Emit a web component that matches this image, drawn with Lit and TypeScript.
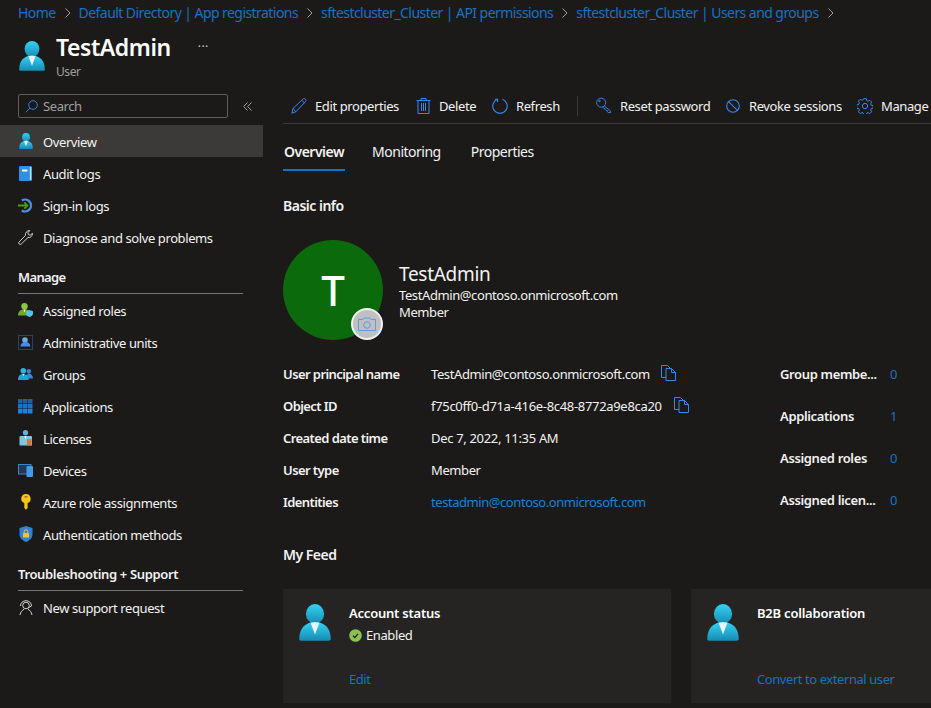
import { LitElement, html, css, svg } from "lit";
import { customElement } from "lit/decorators.js";

const defs = html`<svg width="0" height="0" style="position:absolute">
  <defs>
    <linearGradient id="usr" x1="0" y1="0" x2="0" y2="1">
      <stop offset="0" stop-color="#32d4f5" />
      <stop offset="1" stop-color="#198ab3" />
    </linearGradient>
  </defs>
</svg>`;

const blue = "#3a86f0";

// azure style person
const person = (w: number, h: number) => html`<svg width=${w} height=${h} viewBox="0 0 26 30">
  <ellipse cx="13" cy="8" rx="7.400" ry="8" fill="url(#usr)" />
  <path d="M0.200 28.400C0.200 20 5 14.600 13 14.600S25.800 20 25.800 28.400c0 .9-.6 1.400-1.400 1.400H1.600C.8 29.800.2 29.300.2 28.400Z" fill="url(#usr)" />
  <path d="M9.400 15.300 13 24.800l3.600-9.500c-2.300-.8-4.900-.8-7.200 0Z" fill="#e6f6fb" />
</svg>`;

const icons: Record<string, unknown> = {
  overview: person(14, 16),
  audit: html`<svg width="13" height="15" viewBox="0 0 13 15">
    <rect x="0" y="0" width="13" height="15" rx="1.200" fill="#2f8fe0" />
    <rect x="10.800" y="1" width="1.500" height="13" fill="#bcdcf7" />
    <rect x="3" y="3.500" width="5.500" height="2" fill="#fff" />
  </svg>`,
  signin: html`<svg width="15" height="15" viewBox="0 0 15 15">
    <path d="M3.800 2.600A5.900 5.900 0 1 1 3.800 12.400" fill="none" stroke="#4a90e2" stroke-width="2.400" />
    <path d="M0 7.500h9.500M6.300 4.300l3.200 3.200-3.200 3.200" fill="none" stroke="#4f9a12" stroke-width="1.800" />
  </svg>`,
  diagnose: html`<svg width="15" height="15" viewBox="0 0 15 15" fill="none" stroke="#d2d0ce" stroke-width="1">
    <path d="M.8 12.300 7.500 5.400C7 3 8.800.4 11.800.6L9.800 2.800 10.500 4.700 12.400 5.200 14.400 3.200C14.700 6.200 12.200 8 10 7.500L3 14.300C2 15.100 0 13.300.8 12.300Z" />
  </svg>`,
  roles: html`<svg width="15" height="14" viewBox="0 0 15 14">
    <circle cx="6.500" cy="3.200" r="3.200" fill="#8cc63f" />
    <path d="M0 12.500C0 8.500 2.500 6.300 6.500 6.300s6.500 2.200 6.500 6.200Z" fill="#6fa82d" />
    <path d="M5.500 6.500 6.500 9.500l1-3Z" fill="#fff" />
    <path d="M11.500 7l3.500 1.300v2.500c0 1.600-1.600 2.700-3.500 3.200-1.900-.5-3.500-1.600-3.500-3.200V8.300Z" fill="#50c4e8" />
  </svg>`,
  admin: html`<svg width="15" height="15" viewBox="0 0 15 15">
    <rect x="0.500" y="0.500" width="14" height="14" fill="none" stroke="#3d6fa8" stroke-dasharray="1 1" />
    <circle cx="7" cy="5" r="2.800" fill="#6aa9ee" />
    <path d="M2.500 11.500C2.500 8.500 4.500 7 7.500 7c3 0 4.800 1.500 4.800 4.500Z" fill="#4a8ee0" />
  </svg>`,
  groups: html`<svg width="15" height="12" viewBox="0 0 15 12">
    <circle cx="10.800" cy="3.200" r="2.300" fill="#3a83d6" />
    <path d="M8 10.500c0-3 1-5 3-5s4 2 4 5Z" fill="#3a83d6" />
    <circle cx="5.300" cy="2.800" r="2.800" fill="#2fb5dc" />
    <path d="M0 12c0-4 1.800-6 5.300-6s5.300 2 5.300 6Z" fill="#21a5cf" />
    <path d="M4.500 6 5.300 8.500 6.100 6Z" fill="#e6f6fb" />
  </svg>`,
  apps: html`<svg width="15" height="15" viewBox="0 0 15 15">
    ${[0, 5, 10].map((y) =>
      [0, 5, 10].map(
        (x) => svg`<rect x=${x} y=${y} width="4.500" height="4.500" fill=${y === 0 ? "#235d9c" : y === 5 ? "#1d72c8" : "#1f80e0"} />`
      )
    )}
  </svg>`,
  licenses: html`<svg width="13" height="16" viewBox="0 0 13 16">
    <circle cx="6.500" cy="2.700" r="2.600" fill="#5db4e0" />
    <path d="M.5 15.500V7a1 1 0 0 1 1-1H12a1 1 0 0 1 1 1v8.500Z" fill="#7cc4e8" />
    <path d="M5.500 6 6.500 9.500 7.500 6Z" fill="#fff" />
    <rect x="8" y="9" width="4.500" height="6.500" fill="#d9782a" />
  </svg>`,
  devices: html`<svg width="15" height="13" viewBox="0 0 15 13">
    <rect x="0.500" y="0.500" width="12.500" height="9.500" fill="#1d3a57" stroke="#3f82c8" />
    <rect x="8.500" y="2" width="6.500" height="11" rx="1" fill="#3f9bef" />
  </svg>`,
  key: html`<svg width="10" height="16" viewBox="0 0 10 16">
    <path d="M5 0a4.700 4.700 0 0 1 1.600 9.100V14L5 15.800 3.300 14V9.100A4.700 4.700 0 0 1 5 0Z" fill="#f5c518" />
    <rect x="3.500" y="2" width="3" height="1.500" fill="#a77d07" />
  </svg>`,
  auth: html`<svg width="14" height="16" viewBox="0 0 14 16">
    <path d="M7 0 13.500 2v6c0 4-3 6.500-6.500 8C3.500 14.500.5 12 .5 8V2Z" fill="#2f81dc" />
    <rect x="4" y="7" width="6" height="4.500" rx=".6" fill="#f5c518" />
    <path d="M5.200 7V5.500a1.800 1.800 0 0 1 3.600 0V7" fill="none" stroke="#f5c518" />
  </svg>`,
  support: html`<svg width="14" height="15" viewBox="0 0 14 15" fill="none" stroke="#d2d0ce" stroke-width="1">
    <circle cx="7" cy="5.500" r="3.300" />
    <path d="M1.500 6C1.500 2.800 4 .7 7 .7s5.500 2.100 5.500 5.300" />
    <path d="M1 15c.4-2.800 2.300-5 4-5.700M13 15c-.4-2.800-2.300-5-4-5.700" />
    <path d="M12.500 6 9 8" />
  </svg>`,
  edit: html`<svg width="16" height="16" viewBox="0 0 16 16" fill="none" stroke=${blue} stroke-width="1">
    <path d="M.8 15.200 2 10.500 11.900 1.100c.8-.7 1.900-.7 2.600.1.700.7.700 1.700 0 2.400L4.800 13.800Z" />
    <path d="M2 10.500 4.800 13.800M10.800 2.300l3 3" />
  </svg>`,
  trash: html`<svg width="15" height="16" viewBox="0 0 15 16" fill="none" stroke=${blue} stroke-width="1">
    <path d="M.5 2.500h14M2 2.500V15.500h11V2.500M5 2.500V.5h5v2M5.500 5v8M7.500 5v8M9.500 5v8" />
  </svg>`,
  refresh: html`<svg width="16" height="16" viewBox="0 0 16 16" fill="none" stroke=${blue} stroke-width="1.100">
    <path d="M5.500 1.300A7.200 7.200 0 1 0 10.500 1.300" />
    <path d="M2.900 1.200 5.700 1.300 5.600 4" />
  </svg>`,
  reset: html`<svg width="17" height="17" viewBox="0 0 17 17" fill="none" stroke=${blue} stroke-width="1">
    <circle cx="5.500" cy="5.500" r="4.800" />
    <circle cx="3.700" cy="3.700" r=".8" />
    <path d="M9 9 15.500 14.500V16H13L12 15V13.800H10.800L9.500 12.500V11.500H8.500L7 10.100" />
  </svg>`,
  revoke: html`<svg width="14" height="14" viewBox="0 0 14 14" fill="none" stroke=${blue} stroke-width="1.100">
    <circle cx="7" cy="7" r="6.300" />
    <path d="M2.600 2.600 11.400 11.400" />
  </svg>`,
  gear: html`<svg width="16" height="16" viewBox="0 0 16 16" fill="none" stroke=${blue} stroke-width="1">
    <circle cx="8" cy="8" r="2.700" />
    <path d="M6.700.7h2.600l.4 2 1.300.6 1.800-1 1.800 1.900-1 1.700.6 1.400 2 .4v2.600l-2 .4-.6 1.300 1 1.800-1.800 1.800-1.800-1-1.300.6-.4 2H6.700l-.4-2-1.300-.6-1.800 1-1.800-1.800 1-1.800-.6-1.300-2-.4V6.700l2-.4.6-1.400-1-1.700 1.800-1.900 1.800 1 1.300-.6Z" />
  </svg>`,
};

const copyIcon = html`<svg class="copy" width="15" height="16" viewBox="0 0 15 16" fill="none" stroke=${blue} stroke-width="1">
  <path d="M5 12.500H.5V.5H6.500L9 3" />
  <path d="M5 3.500h5.500l4 4v8H5ZM10.500 3.500v4h4" />
</svg>`;

const camera = html`<svg width="18" height="14" viewBox="0 0 18 14" fill="none" stroke="#5a9bec" stroke-width="1">
  <path d="M.5 2.500h4.500l1-1.500h6l1 1.500h4.500v11H.5Z" />
  <circle cx="9" cy="8" r="3.300" />
</svg>`;

const nav = (icon: string, label: string, selected = false) =>
  html`<div class="nav ${selected ? "selected" : ""}">
    <span class="nav-icon">${icons[icon]}</span><span class="nav-label">${label}</span>
  </div>`;

const tool = (icon: string, label: string, width: number) =>
  html`<div class="tool" style="width:${width}px">
    <span class="tool-icon">${icons[icon]}</span><span>${label}</span>
  </div>`;

@customElement("app-root")
export class AppRoot extends LitElement {
  static styles = css`
    :host {
      display: block;
      width: 931px;
      height: 708px;
      overflow: hidden;
      background: #1b1a19;
      color: #f3f2f1;
      font: 13px/18px "Noto Sans", sans-serif;
      letter-spacing: -0.4px;
    }
    a { color: #1673c4; text-decoration: none; }
    .crumbs {
      display: flex;
      align-items: center;
      height: 26px;
      padding-left: 18px;
      white-space: nowrap;
      font-size: 14px;
      letter-spacing: -0.56px;
      color: #1673c4;
    }
    .crumbs svg { margin: 0 8px 0 9px; }
    .head { display: flex; height: 68px; padding-left: 19px; }
    .head-icon { margin: 15px 11px 0 0; }
    .head-title { padding-top: 7px; }
    .head-title h1 {
      margin: 0;
      font-size: 23px;
      line-height: 28px;
      font-weight: 600;
      color: #fff;
      letter-spacing: -0.45px;
    }
    .head-title div { margin-top: 3px; font-size: 12px; line-height: 16px; color: #a19f9d; }
    .more { margin: 12px 0 0 27px; color: #c8c6c4; font-size: 12px; letter-spacing: 0.5px; }
    .body { display: flex; }
    .side { width: 263px; flex: none; }
    .search-row { display: flex; align-items: center; padding-left: 18px; height: 24px; margin-bottom: 7px; }
    .search {
      display: flex;
      align-items: center;
      gap: 5px;
      box-sizing: border-box;
      width: 210px;
      height: 24px;
      padding-left: 6px;
      border: 1px solid #605e5c;
      border-radius: 2px;
      color: #a19f9d;
    }
    .collapse { display: flex; margin-left: 15px; }
    .nav { display: flex; align-items: center; height: 32px; padding-left: 18px; }
    .nav.selected { background: #3b3a39; }
    .nav-icon { display: flex; justify-content: center; width: 15px; margin-right: 10px; }
    .nav-label { padding-top: 2px; }
    .sec {
      margin: 0 20px 0 18px;
      padding: 15px 0 7px;
      font-weight: 600;
      letter-spacing: -0.35px;
      border-bottom: 1px solid #797775;
    }
    .sec.manage { letter-spacing: -0.65px; }
    .main { flex: 1; min-width: 0; padding-left: 20px; }
    .toolbar {
      display: flex;
      align-items: center;
      height: 23px;
      padding-bottom: 6px;
      border-bottom: 1px solid #3b3a39;
      white-space: nowrap;
    }
    .tool { display: flex; align-items: center; flex: none; padding-left: 8px; box-sizing: border-box; }
    .tool-icon { display: flex; justify-content: center; width: 16px; margin-right: 8px; }
    .tool-sep { width: 1px; height: 20px; background: #3b3a39; margin: 0 10px 0 17px; flex: none; }
    .tabs { display: flex; height: 47px; align-items: stretch; font-size: 14px; }
    .tab { padding: 19px 1px 0; box-sizing: border-box; letter-spacing: -0.5px; }
    .tab.on { border-bottom: 2px solid #1673c4; font-weight: 600; letter-spacing: -0.5px; margin-right: 26px; }
    .tab.mon { margin-right: 28px; }
    h2 { margin: 0; font-size: 14px; line-height: 18px; font-weight: 600; letter-spacing: -0.5px; }
    .basic { margin-top: 26px; }
    .profile { display: flex; align-items: flex-start; margin-top: 25px; height: 100px; }
    .avatar {
      position: relative;
      width: 100px;
      height: 100px;
      flex: none;
      display: flex;
      align-items: center;
      justify-content: center;
      border-radius: 50%;
      background: #0b6a0b;
      color: #fff;
      font-size: 42px;
      font-weight: 500;
      letter-spacing: 0;
    }
    .badge {
      position: absolute;
      right: 0;
      bottom: 0;
      display: flex;
      align-items: center;
      justify-content: center;
      box-sizing: border-box;
      width: 32px;
      height: 32px;
      border-radius: 50%;
      background: #c0c0c0;
      border: 2px solid #f3f2f1;
    }
    .who { margin: 21px 0 0 16px; }
    .who .name { font-size: 19px; line-height: 26px; letter-spacing: -0.3px; }
    .who div { line-height: 17px; }
    .info { display: flex; margin-top: 25px; height: 160px; }
    .props { display: grid; grid-template-columns: 148px auto; grid-auto-rows: 32px; width: 497px; align-content: start; }
    .props b { font-weight: 600; letter-spacing: -0.58px; }
    .props span { display: flex; align-items: flex-start; }
    .props .digits { letter-spacing: -0.32px; }
    .props a { color: #1683d8; letter-spacing: -0.44px; }
    .copy { margin-left: 11px; }
    .digits .copy { margin-left: 12px; }
    .counts { display: grid; grid-template-columns: 110px auto; grid-auto-rows: 42px; align-content: start; }
    .counts b { font-weight: 600; letter-spacing: -0.35px; }
    .feed { margin-top: 21px; }
    .cards { display: flex; gap: 20px; margin-top: 25px; }
    .card {
      display: flex;
      flex: none;
      box-sizing: border-box;
      width: 388px;
      height: 114px;
      padding: 15px 0 0 16px;
      background: #252423;
    }
    .card.wide { width: 300px; }
    .card-text { margin-left: 18px; display: flex; flex-direction: column; height: 84px; }
    .card-text b { font-weight: 600; color: #fff; letter-spacing: -0.22px; }
    .status { display: flex; align-items: center; gap: 4px; margin-top: 4px; }
    .card-text a { margin-top: auto; letter-spacing: -0.43px; }
  `;

  render() {
    const chevron = html`<svg width="6" height="10" viewBox="0 0 6 10" fill="none" stroke="#a19f9d"><path d="M.5.5 5 5 .5 9.500" /></svg>`;
    const crumbs = [
      "Home",
      "Default Directory | App registrations",
      "sftestcluster_Cluster | API permissions",
      "sftestcluster_Cluster | Users and groups",
    ];
    return html`
      ${defs}
      <div class="crumbs">
        ${crumbs.map((c) => html`<span>${c}</span>${chevron}`)}
      </div>
      <div class="head">
        <div class="head-icon">${person(26, 30)}</div>
        <div class="head-title">
          <h1>TestAdmin</h1>
          <div>User</div>
        </div>
        <div class="more">···</div>
      </div>
      <div class="body">
        <div class="side">
          <div class="search-row">
            <div class="search">
              <svg width="13" height="13" viewBox="0 0 13 13" fill="none" stroke="#2f7fd8">
                <circle cx="8" cy="5" r="4.300" /><path d="M5 8 .7 12.300" />
              </svg>
              <span>Search</span>
            </div>
            <span class="collapse">
              <svg width="9" height="9" viewBox="0 0 9 9" fill="none" stroke="#a19f9d">
                <path d="M4.500.5.700 4.500l3.800 4M8.500.5 4.700 4.500l3.800 4" />
              </svg>
            </span>
          </div>
          ${nav("overview", "Overview", true)}
          ${nav("audit", "Audit logs")}
          ${nav("signin", "Sign-in logs")}
          ${nav("diagnose", "Diagnose and solve problems")}
          <div class="sec manage">Manage</div>
          ${nav("roles", "Assigned roles")}
          ${nav("admin", "Administrative units")}
          ${nav("groups", "Groups")}
          ${nav("apps", "Applications")}
          ${nav("licenses", "Licenses")}
          ${nav("devices", "Devices")}
          ${nav("key", "Azure role assignments")}
          ${nav("auth", "Authentication methods")}
          <div class="sec">Troubleshooting + Support</div>
          ${nav("support", "New support request")}
        </div>
        <div class="main">
          <div class="toolbar">
            ${tool("edit", "Edit properties", 124)}
            ${tool("trash", "Delete", 77)}
            ${tool("refresh", "Refresh", 76)}
            <div class="tool-sep"></div>
            ${tool("reset", "Reset password", 129)}
            ${tool("revoke", "Revoke sessions", 132)}
            ${tool("gear", "Manage", 80)}
          </div>
          <div class="tabs">
            <div class="tab on">Overview</div>
            <div class="tab mon">Monitoring</div>
            <div class="tab">Properties</div>
          </div>
          <h2 class="basic">Basic info</h2>
          <div class="profile">
            <div class="avatar">T<span class="badge">${camera}</span></div>
            <div class="who">
              <div class="name">TestAdmin</div>
              <div>TestAdmin@contoso.onmicrosoft.com</div>
              <div>Member</div>
            </div>
          </div>
          <div class="info">
            <div class="props">
              <b>User principal name</b><span>TestAdmin@contoso.onmicrosoft.com${copyIcon}</span>
              <b>Object ID</b><span class="digits">f75c0ff0-d71a-416e-8c48-8772a9e8ca20${copyIcon}</span>
              <b>Created date time</b><span class="digits">Dec 7, 2022, 11:35 AM</span>
              <b>User type</b><span>Member</span>
              <b>Identities</b><span><a>testadmin@contoso.onmicrosoft.com</a></span>
            </div>
            <div class="counts">
              <b>Group membe...</b><a>0</a>
              <b>Applications</b><a>1</a>
              <b>Assigned roles</b><a>0</a>
              <b>Assigned licen...</b><a>0</a>
            </div>
          </div>
          <h2 class="feed">My Feed</h2>
          <div class="cards">
            <div class="card">
              ${person(32, 37)}
              <div class="card-text">
                <b>Account status</b>
                <div class="status">
                  <svg width="13" height="13" viewBox="0 0 13 13">
                    <circle cx="6.500" cy="6.500" r="6.300" fill="#8cc152" />
                    <path d="M4 6.700 5.800 8.500 9 4.800" fill="none" stroke="#1b1a19" stroke-width="1.200" />
                  </svg>
                  Enabled
                </div>
                <a>Edit</a>
              </div>
            </div>
            <div class="card wide">
              ${person(32, 37)}
              <div class="card-text">
                <b>B2B collaboration</b>
                <a>Convert to external user</a>
              </div>
            </div>
          </div>
        </div>
      </div>
    `;
  }
}
